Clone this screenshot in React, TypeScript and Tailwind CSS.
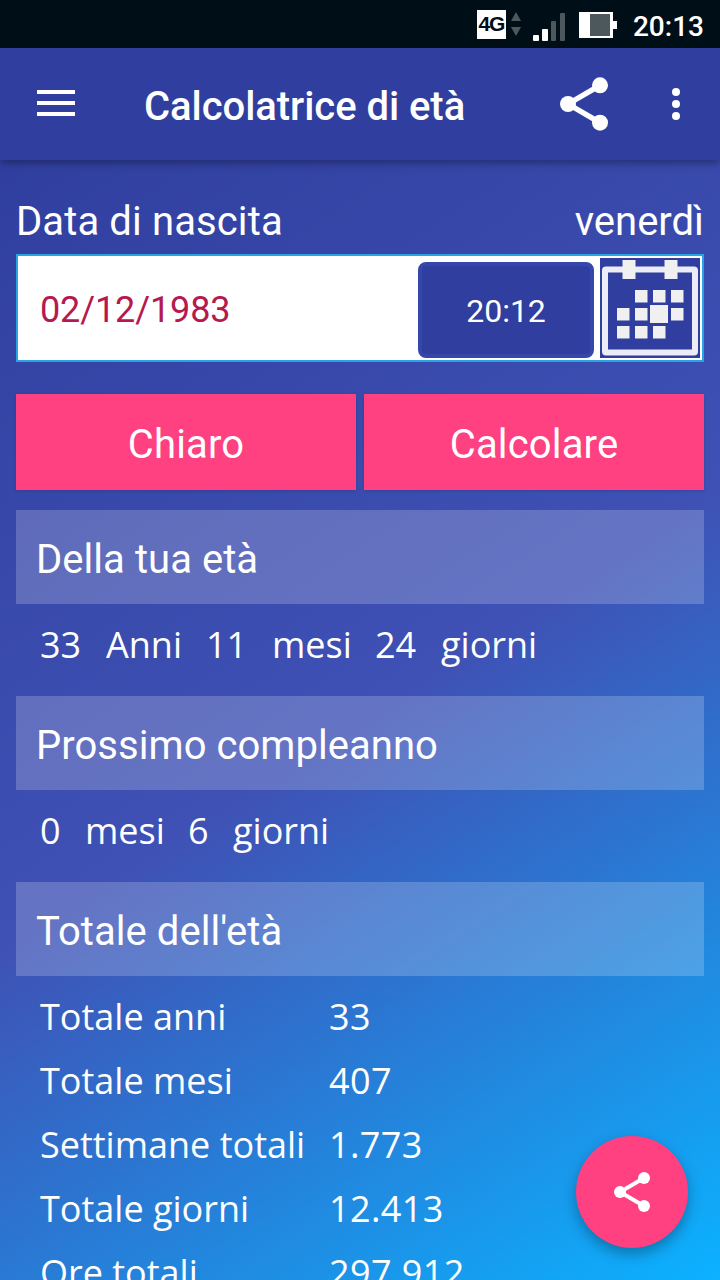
// App.tsx
// Calcolatrice di età — schermata principale

import type { ReactNode } from 'react';

const totals = [
  { label: 'Totale anni', value: '33' },
  { label: 'Totale mesi', value: '407' },
  { label: 'Settimane totali', value: '1.773' },
  { label: 'Totale giorni', value: '12.413' },
  { label: 'Ore totali', value: '297.912' },
];

function ShareIcon({ className }: { className: string }) {
  return (
    <svg viewBox="3 2 18 20" className={className} fill="currentColor">
      <path d="M18 5 6 12l12 7" fill="none" stroke="currentColor" strokeWidth="2" />
      <circle cx="18" cy="5" r="3" />
      <circle cx="6" cy="12" r="3" />
      <circle cx="18" cy="19" r="3" />
    </svg>
  );
}

function CalendarIcon() {
  const cells = [
    [35, 32], [53, 32], [71, 32],
    [17, 50], [35, 50], [71, 50],
    [17, 68], [35, 68], [53, 68],
  ];
  return (
    <svg viewBox="0 0 100 100" className="h-[100px] w-[100px]">
      <rect width="100" height="100" fill="#303f9f" />
      <rect x="5" y="11.5" width="90" height="83" rx="1" fill="none" stroke="#ececf8" strokeWidth="6" />
      <rect x="22.5" y="2" width="13" height="19" fill="#f0f0f0" />
      <rect x="64.5" y="2" width="13" height="19" fill="#f0f0f0" />
      {cells.map(([x, y]) => (
        <rect key={`${x}-${y}`} x={x} y={y} width="12.5" height="12.5" fill="#f0f0f0" />
      ))}
      <rect x="50" y="47" width="18" height="18" fill="#f0f0f0" />
    </svg>
  );
}

function StatusBar() {
  return (
    <div className="flex h-12 shrink-0 items-center justify-end bg-[#000f17] pr-4 text-white">
      <div className="flex h-[29px] w-[29px] items-center justify-center bg-white font-['Liberation_Sans',sans-serif] text-[21px] font-bold tracking-[-1px] text-[#000f17]">
        4G
      </div>
      <svg viewBox="0 0 10 24" className="ml-[5px] h-6 w-[10px]" fill="#4d585d">
        <path d="M5 0 10 9H0zM5 24 0 15h10z" />
      </svg>
      <svg viewBox="0 0 33 28" className="mt-1.5 ml-3 h-7 w-[33px]" fill="#fff">
        <rect x="0" y="22" width="6" height="6" rx="1" />
        <rect x="9" y="16" width="6" height="12" rx="1" />
        <rect x="18" y="8" width="5" height="20" rx="1" fill="#4d585d" />
        <rect x="27" y="0" width="5" height="28" rx="1" fill="#4d585d" />
      </svg>
      <svg viewBox="0 0 38 26" className="mt-0.5 ml-[13px] h-[26px] w-[38px]">
        <path d="M0 0h34v9h4v8h-4v9H0z" fill="#fff" />
        <rect x="11" y="2" width="20" height="22" fill="#4d585d" />
      </svg>
      <span className="ml-4 pt-1.5 text-[28px] leading-none font-medium">20:13</span>
    </div>
  );
}

function SectionTitle({ children }: { children: ReactNode }) {
  return (
    <h2 className="flex h-[94px] items-center bg-white/20 pt-1.5 pl-5 text-[40px] tracking-[0.05px]">{children}</h2>
  );
}

export default function App() {
  return (
    <div className="relative flex h-[1280px] w-[720px] flex-col overflow-hidden font-['Roboto',sans-serif] text-white">
      <StatusBar />

      <header className="z-10 flex h-28 shrink-0 items-center bg-[#303f9f] shadow-[0_3px_8px_rgba(0,0,0,0.35)]">
        <button className="mb-0.5 ml-[37px] flex w-[38px] flex-col gap-[7px]">
          <span className="h-1 bg-white" />
          <span className="h-1 bg-white" />
          <span className="h-1 bg-white" />
        </button>
        <h1 className="ml-[69px] pt-1.5 text-[40px] font-medium tracking-[-0.05px]">Calcolatrice di età</h1>
        <button className="ml-auto">
          <ShareIcon className="h-[54px] w-12" />
        </button>
        <button className="mr-10 ml-16 flex w-2 flex-col gap-1">
          <span className="h-2 w-2 rounded-full bg-white" />
          <span className="h-2 w-2 rounded-full bg-white" />
          <span className="h-2 w-2 rounded-full bg-white" />
        </button>
      </header>

      <main className="flex h-[1120px] shrink-0 flex-col overflow-hidden bg-[linear-gradient(147.3deg,#303f9f_0%,#3f51b5_50%,#0bb2ff_100%)] px-4">
        <div className="flex h-[94px] shrink-0 items-end justify-between pb-2 text-[40px] leading-[48px]">
          <span className="tracking-[0.12px]">Data di nascita</span>
          <span>venerdì</span>
        </div>

        <div className="flex h-[108px] shrink-0 items-center border-2 border-[#29a3e2] bg-white pr-0.5">
          <span className="flex-1 pt-1 pl-[22px] text-[36px] tracking-[-0.12px] text-[#b5194f]">02/12/1983</span>
          <button className="mt-1 h-24 w-44 rounded-lg border-4 border-[#3547ab] bg-[#303f9f] pt-0.5 text-[32px]">20:12</button>
          <button className="ml-1.5">
            <CalendarIcon />
          </button>
        </div>

        <div className="mt-8 grid shrink-0 grid-cols-2 gap-2 text-[40px] tracking-[0.15px]">
          <button className="h-24 bg-[#ff4081] pt-1.5 shadow-[0_1px_3px_rgba(0,0,0,0.15)]">Chiaro</button>
          <button className="h-24 bg-[#ff4081] pt-1.5 shadow-[0_1px_3px_rgba(0,0,0,0.15)]">Calcolare</button>
        </div>

        <section className="mt-5">
          <SectionTitle>Della tua età</SectionTitle>
          <p className="flex h-[92px] pt-[15px] pl-6 font-['Open_Sans',sans-serif] text-[36px] leading-[52px]">
            <span className="w-[66px]">33</span>
            <span className="w-[100px]">Anni</span>
            <span className="w-[66px]">11</span>
            <span className="w-[103px]">mesi</span>
            <span className="w-[66px]">24</span>
            <span>giorni</span>
          </p>
        </section>

        <section>
          <SectionTitle>Prossimo compleanno</SectionTitle>
          <p className="flex h-[92px] pt-[15px] pl-6 font-['Open_Sans',sans-serif] text-[36px] leading-[52px]">
            <span className="w-[45px]">0</span>
            <span className="w-[103px]">mesi</span>
            <span className="w-[45px]">6</span>
            <span>giorni</span>
          </p>
        </section>

        <section>
          <SectionTitle>Totale dell'età</SectionTitle>
          <div className="pt-[9px] pl-6 font-['Open_Sans',sans-serif] text-[36px]">
            {totals.map((t) => (
              <div key={t.label} className="flex h-16 items-center">
                <span className="w-[289px]">{t.label}</span>
                <span className="tracking-[0.4px]">{t.value}</span>
              </div>
            ))}
          </div>
        </section>
      </main>

      <button className="absolute right-8 bottom-8 z-10 flex h-28 w-28 items-center justify-center rounded-full bg-[#ff4081] shadow-[0_6px_14px_rgba(0,0,0,0.3)]">
        <ShareIcon className="h-10 w-9" />
      </button>
    </div>
  );
}
